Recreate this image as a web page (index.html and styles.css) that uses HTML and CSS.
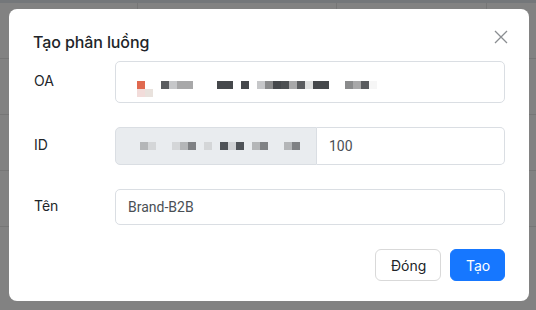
FILE: index.html
```html
<!DOCTYPE html>
<html lang="vi">
<head>
<meta charset="utf-8">
<title>Tạo phân luồng</title>
<link rel="stylesheet" href="styles.css">
</head>
<body>
<div class="page">
  <div class="page-top"></div>
  <div class="page-row"></div>
  <div class="page-row"></div>
  <div class="page-row"></div>
  <div class="page-row"></div>
</div>
<div class="overlay">
  <div class="modal">
    <div class="modal-header">
      <h2 class="modal-title">Tạo phân luồng</h2>
      <button class="close" aria-label="Close">
        <svg width="14" height="14" viewBox="0 0 14 14"><path d="M1 1L13 13M13 1L1 13" stroke="#8a8d91" stroke-width="1.3" fill="none"/></svg>
      </button>
    </div>
    <div class="form">
      <div class="row">
        <label class="label">OA</label>
        <div class="input input-oa">
          <div class="px-line">
            <span class="px c-red"></span><span class="px c-w"></span><span class="px c-w"></span>
            <span class="px c-d2"></span><span class="px c-l1"></span><span class="px c-m1"></span><span class="px c-m1"></span>
            <span class="px c-w"></span><span class="px c-w"></span><span class="px c-w"></span>
            <span class="px c-d1"></span><span class="px c-d1"></span><span class="px c-w"></span>
            <span class="px c-d1"></span><span class="px c-w"></span>
            <span class="px c-l1"></span><span class="px c-m2"></span><span class="px c-d1"></span><span class="px c-d3"></span>
            <span class="px c-m1"></span><span class="px c-d2"></span><span class="px c-l2"></span><span class="px c-d1"></span><span class="px c-d1"></span>
            <span class="px c-w"></span><span class="px c-w"></span>
            <span class="px c-m2"></span><span class="px c-m1"></span><span class="px c-d2"></span><span class="px c-l3"></span>
          </div>
          <div class="px-line">
            <span class="px c-pink"></span><span class="px c-beige"></span>
          </div>
        </div>
      </div>
      <div class="row">
        <label class="label">ID</label>
        <div class="group">
          <div class="addon">
            <div class="px-line">
              <span class="px c-g3"></span><span class="px c-g1"></span>
              <span class="px c-e"></span><span class="px c-e"></span>
              <span class="px c-g1"></span><span class="px c-g3"></span><span class="px c-g4"></span>
              <span class="px c-e"></span><span class="px c-g1"></span><span class="px c-e"></span>
              <span class="px c-g5"></span><span class="px c-g2"></span><span class="px c-g5"></span><span class="px c-e"></span>
              <span class="px c-g3"></span><span class="px c-g4"></span>
              <span class="px c-e"></span><span class="px c-e"></span>
              <span class="px c-g3"></span><span class="px c-g4"></span>
            </div>
          </div>
          <div class="input input-id">100</div>
        </div>
      </div>
      <div class="row">
        <label class="label">Tên</label>
        <div class="input input-name">Brand-B2B</div>
      </div>
    </div>
    <div class="footer">
      <button class="btn btn-light">Đóng</button>
      <button class="btn btn-primary">Tạo</button>
    </div>
  </div>
</div>
</body>
</html>
```
FILE: styles.css
```css
* { box-sizing: border-box; }
html, body { margin: 0; padding: 0; }
body {
  width: 536px;
  height: 310px;
  overflow: hidden;
  font-family: "Inter", "Noto Sans", sans-serif;
  color: #212529;
}
.page {
  height: 310px;
  background: #828282;
  display: flex;
  flex-direction: column;
}
.page-top { height: 3px; background: #74777a; }
.page-row {
  height: 56px;
  border-bottom: 1px solid #767676;
  background:
    linear-gradient(#767676, #767676) 137px 0 / 1px 100% no-repeat,
    linear-gradient(#767676, #767676) 336px 0 / 1px 100% no-repeat,
    linear-gradient(#767676, #767676) 486px 0 / 1px 100% no-repeat;
}
.page-row:first-of-type { height: 104px; }

.overlay {
  position: fixed;
  inset: 0;
  padding: 9px 0 0 9px;
}
.modal {
  width: 520px;
  height: 292px;
  background: #fff;
  border-radius: 8px;
  padding: 21px 24px 19px 24px;
  display: flex;
  flex-direction: column;
}
.modal-header {
  display: flex;
  justify-content: space-between;
  align-items: flex-start;
  height: 24px;
}
.modal-title {
  margin: 0;
  font-size: 16px;
  line-height: 24px;
  font-weight: 500;
  color: #212529;
  letter-spacing: -0.1px;
}
.close {
  border: 0;
  background: none;
  padding: 0;
  margin: 0 -3px 0 0;
  width: 14px;
  height: 14px;
  display: flex;
}
.form {
  margin-top: 7px;
  display: flex;
  flex-direction: column;
  gap: 24px;
}
.row {
  display: grid;
  grid-template-columns: 82px 1fr;
  align-items: center;
}
.label {
  font-size: 14px;
  line-height: 20px;
  color: #212529;
  padding-left: 1px;
  margin-top: -3px;
}
.input {
  border: 1px solid #dadee3;
  border-radius: 5px;
  background: #fff;
  font-family: "Roboto", "Inter", sans-serif;
  font-size: 14px;
  color: #4a4f55;
  padding: 0 12px;
  display: flex;
  align-items: center;
}
.input-oa {
  height: 42px;
  padding: 19px 20px 0 21px;
  flex-direction: column;
  align-items: flex-start;
  justify-content: flex-start;
}
.px-line { display: flex; }
.px { width: 8px; height: 8px; display: block; }
.c-w { background: transparent; }
.c-red { background: #e0694f; }
.c-pink { background: #f2dcda; }
.c-beige { background: #e9e2dd; }
.c-d1 { background: #45484b; }
.c-d2 { background: #5a5c5f; }
.c-d3 { background: #4d5052; }
.c-m1 { background: #a8a8a9; }
.c-m2 { background: #8a8b8c; }
.c-l1 { background: #c6c7c9; }
.c-l2 { background: #e0e1e1; }
.c-l3 { background: #f6f6f6; }
.c-e { background: transparent; }
.c-g1 { background: #d4d6d8; }
.c-g2 { background: #d0d2d5; }
.c-g3 { background: #b4b6b8; }
.c-g4 { background: #7f8184; }
.c-g5 { background: #4f5358; }

.group {
  display: flex;
  height: 38px;
}
.addon {
  width: 202px;
  background: #e9ecef;
  border: 1px solid #dadee3;
  border-radius: 5px 0 0 5px;
  padding: 0 0 0 24px;
  display: flex;
  align-items: center;
}
.input-id {
  flex: 1;
  border-left: 0;
  border-radius: 0 5px 5px 0;
}
.input-name { height: 36px; }

.footer {
  margin-top: 24px;
  display: flex;
  justify-content: flex-end;
  gap: 9px;
}
.btn {
  height: 32px;
  border-radius: 6px;
  font-family: "Inter", "Noto Sans", sans-serif;
  font-size: 14px;
  padding: 0 15px;
  cursor: pointer;
}
.btn-light {
  width: 66px;
  background: #fff;
  border: 1px solid #d9d9d9;
  color: #212529;
}
.btn-primary {
  width: 55px;
  background: #1677ff;
  border: 1px solid #1677ff;
  color: #fff;
}
```
